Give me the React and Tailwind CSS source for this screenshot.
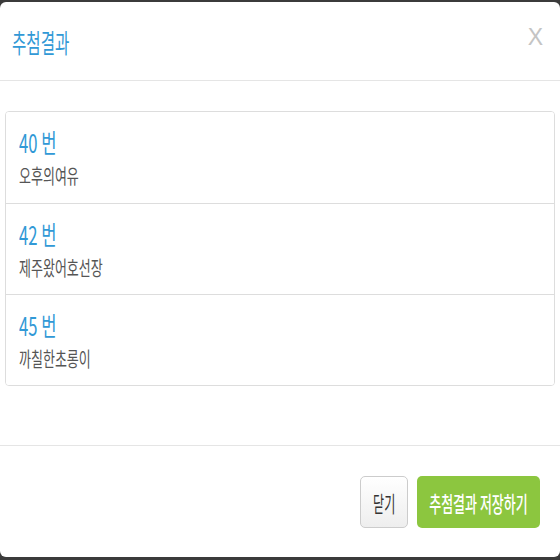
import React from "react";

const results = [
  { id: 1, no: 40, name: "오후의여유" },
  { id: 2, no: 42, name: "제주왔어호선장" },
  { id: 3, no: 45, name: "까칠한초롱이" },
];

const font = { fontFamily: '"Noto Sans CJK KR", "Noto Sans", sans-serif' };

const App = () => {
  return (
    <div className="w-[560px] h-[560px] overflow-hidden bg-[#3b3b3b] pt-[2px]" style={font}>
      <div className="h-[555px] bg-white rounded-md flex flex-col">
        <div className="h-[79px] shrink-0 flex items-center justify-between pl-[12px] pr-[17px] pt-[1px] border-b border-[#e5e5e5]">
          <span className="inline-block origin-left scale-x-[0.6] text-[26px] leading-[30px] text-[#3199d6] whitespace-nowrap">
            추첨결과
          </span>
          <button
            className="text-[23px] leading-none text-[#c4c4c4] -mt-[8px]"
            style={{ fontFamily: '"Liberation Sans", Arial, sans-serif' }}
          >
            X
          </button>
        </div>

        <div className="pt-[30px] pb-[59px] px-[5px] shrink-0">
          <ul className="border border-[#dddddd] rounded-[4px] overflow-hidden">
            {results.map((r, i) => (
              <li
                key={r.id}
                className={
                  "h-[91px] pl-[13px] pt-[15px] bg-white " +
                  (i > 0 ? "border-t border-[#dddddd]" : "")
                }
              >
                <div className="h-[30px] flex items-center">
                  <span className="inline-block origin-left scale-x-[0.64] text-[26px] leading-[30px] text-[#3199d6] whitespace-nowrap">
                    {r.no} 번
                  </span>
                </div>
                <div className="h-[26px] mt-[6px] flex items-center">
                  <span className="inline-block origin-left scale-x-[0.65] text-[20px] leading-[24px] text-[#555555] whitespace-nowrap">
                    {r.name}
                  </span>
                </div>
              </li>
            ))}
          </ul>
        </div>

        <div className="border-t border-[#e5e5e5] flex-1 flex justify-end items-start gap-[9px] pt-[30px] pr-[20px]">
          <button className="w-[48px] h-[52px] rounded-[5px] border border-[#cccccc] bg-gradient-to-b from-[#ffffff] to-[#eeeeee] flex items-center justify-center overflow-hidden">
            <span className="inline-block scale-x-[0.55] text-[22px] leading-none text-[#333333] whitespace-nowrap">
              닫기
            </span>
          </button>
          <button className="w-[123px] h-[52px] rounded-[5px] bg-[#8cc63f] flex items-center justify-center overflow-hidden">
            <span className="inline-block scale-x-[0.59] text-[22px] leading-none font-medium text-white whitespace-nowrap">
              추첨결과 저장하기
            </span>
          </button>
        </div>
      </div>
    </div>
  );
};

export default App;
